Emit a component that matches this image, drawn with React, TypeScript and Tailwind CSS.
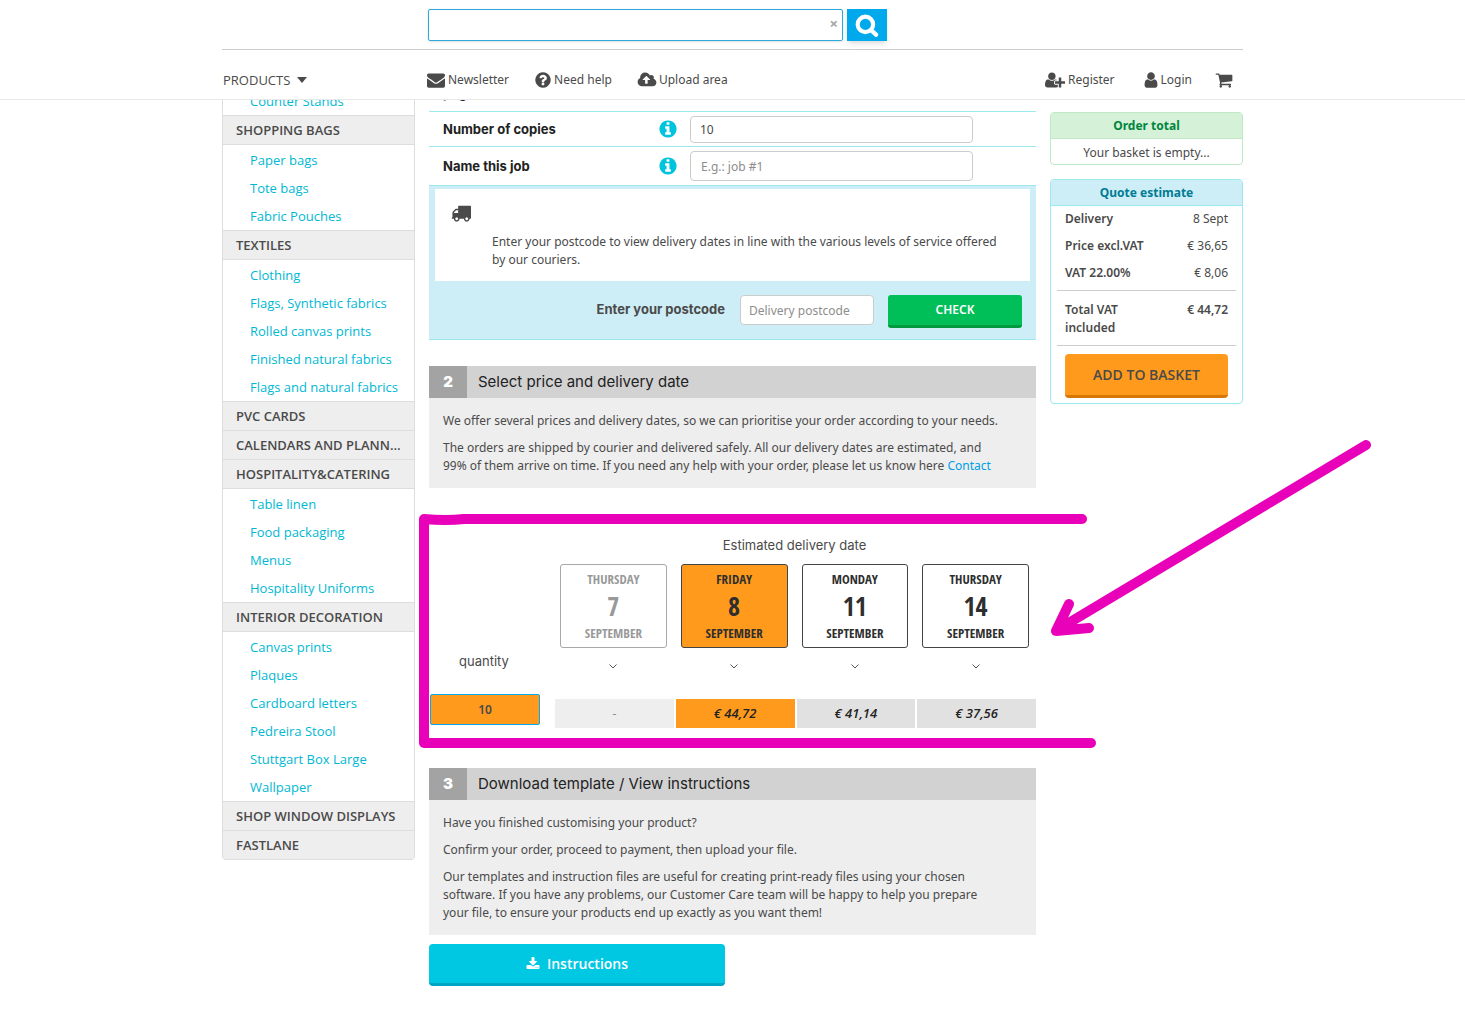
import React, { useState } from "react";

const ICONS = {
  envelope:
    "M1792 710v794q0 66-47 113t-113 47h-1472q-66 0-113-47t-47-113v-794q44 49 101 87 362 246 497 345 57 42 92.5 65.5t94.5 48 110 24.5h2q51 0 110-24.5t94.5-48 92.5-65.5q170-123 498-345 57-39 100-87zm0-294q0 79-49 151t-122 123q-376 261-468 325-10 7-42.5 31t-54 38.5-52 32.5-57.5 27-50 9h-2q-23 0-50-9t-57.5-27-52-32.5-54-38.5-42.5-31q-91-64-262-182.5t-205-142.5q-62-42-117-115.5t-55-136.5q0-78 41.5-130t118.5-52h1472q65 0 112.5 47t47.5 113z",
  question:
    "M1024 1376v-192q0-14-9-23t-23-9h-192q-14 0-23 9t-9 23v192q0 14 9 23t23 9h192q14 0 23-9t9-23zm256-672q0-88-55.5-163t-138.5-116-170-41q-243 0-371 213-15 24 8 42l132 100q7 6 19 6 16 0 25-12 53-68 86-92 34-24 86-24 48 0 85.5 26t37.5 59q0 38-20 61t-68 45q-63 28-115.5 86.5t-52.5 125.5v36q0 14 9 23t23 9h192q14 0 23-9t9-23q0-19 21.5-49.5t54.5-49.5q32-18 49-28.5t46-35 44.5-48 28-60.5 12.5-81zm384 192q0 209-103 385.5t-279.5 279.5-385.5 103-385.5-103-279.5-279.5-103-385.5 103-385.5 279.5-279.5 385.5-103 385.5 103 279.5 279.5 103 385.5z",
  info:
    "M1152 1376v-160q0-14-9-23t-23-9h-96v-512q0-14-9-23t-23-9h-320q-14 0-23 9t-9 23v160q0 14 9 23t23 9h96v320h-96q-14 0-23 9t-9 23v160q0 14 9 23t23 9h448q14 0 23-9t9-23zm-128-896v-160q0-14-9-23t-23-9h-192q-14 0-23 9t-9 23v160q0 14 9 23t23 9h192q14 0 23-9t9-23zm640 416q0 209-103 385.5t-279.5 279.5-385.5 103-385.5-103-279.5-279.5-103-385.5 103-385.5 279.5-279.5 385.5-103 385.5 103 279.5 279.5 103 385.5z",
  upload:
    "M1344 864q0-14-9-23l-352-352q-9-9-23-9t-23 9l-351 351q-10 12-10 24 0 14 9 23t23 9h224v352q0 13 9.5 22.5t22.5 9.5h192q13 0 22.5-9.5t9.5-22.5v-352h224q13 0 22.5-9.5t9.5-22.5zm640 288q0 159-112.5 271.5t-271.5 112.5h-1088q-185 0-316.5-131.5t-131.5-316.5q0-130 70-240t188-165q-2-30-2-43 0-212 150-362t362-150q156 0 285.5 87t188.5 231q71-62 166-62 106 0 181 75t75 181q0 76-41 138 130 31 213.5 135.5t83.5 238.5z",
  userPlus:
    "M704 896q-159 0-271.5-112.5t-112.5-271.5 112.5-271.5 271.5-112.5 271.5 112.5 112.5 271.5-112.5 271.5-271.5 112.5zm960 128h352q13 0 22.5 9.5t9.5 22.5v192q0 13-9.5 22.5t-22.5 9.5h-352v352q0 13-9.5 22.5t-22.5 9.5h-192q-13 0-22.5-9.5t-9.5-22.5v-352h-352q-13 0-22.5-9.5t-9.5-22.5v-192q0-13 9.5-22.5t22.5-9.5h352v-352q0-13 9.5-22.5t22.5-9.5h192q13 0 22.5 9.5t9.5 22.5v352zm-736 224q0 52 38 90t90 38h256v238q-68 50-171 50h-874q-121 0-194-69t-73-190q0-53 3.5-103.5t14-109 26.5-108.5 43-97.5 62-81 85.5-53.5 111.5-20q19 0 39 17 79 61 154.5 91.5t164.5 30.5 164.5-30.5 154.5-91.5q20-17 39-17 132 0 217 96h-223q-52 0-90 38t-38 90v192z",
  user:
    "M1536 1399q0 109-62.5 187t-150.5 78h-854q-88 0-150.5-78t-62.5-187q0-85 8.5-160.5t31.5-152 58.5-131 94-89 134.5-34.5q131 128 313 128t313-128q76 0 134.5 34.5t94 89 58.5 131 31.5 152 8.5 160.5zm-256-887q0 159-112.5 271.5t-271.5 112.5-271.5-112.5-112.5-271.5 112.5-271.5 271.5-112.5 271.5 112.5 112.5 271.5z",
  cart:
    "M704 1536q0 52-38 90t-90 38-90-38-38-90 38-90 90-38 90 38 38 90zm896 0q0 52-38 90t-90 38-90-38-38-90 38-90 90-38 90 38 38 90zm128-1088v512q0 24-16.5 42.5t-40.5 21.5l-1044 122q13 60 13 70 0 16-24 64h920q26 0 45 19t19 45-19 45-45 19h-1024q-26 0-45-19t-19-45q0-11 8-31.5t16-36 21.5-40 15.5-29.5l-177-823h-204q-26 0-45-19t-19-45 19-45 45-19h256q16 0 28.5 6.5t19.5 15.5 13 24.5 8 26 5.5 29.5 4.5 26h1201q26 0 45 19t19 45z",
  truck:
    "M640 1408q0-52-38-90t-90-38-90 38-38 90 38 90 90 38 90-38 38-90zm-384-512h384v-256h-158q-13 0-22 9l-195 195q-9 9-9 22v30zm1280 512q0-52-38-90t-90-38-90 38-38 90 38 90 90 38 90-38 38-90zm256-1088v1024q0 15-4 26.5t-13.5 18.5-16.5 11.5-23.5 6-22.5 2-25.5 0-22.5-.5q0 106-75 181t-181 75-181-75-75-181h-384q0 106-75 181t-181 75-181-75-75-181h-64q-3 0-22.5.5t-25.5 0-22.5-2-23.5-6-16.5-11.5-13.5-18.5-4-26.5q0-26 19-45t45-19v-320q0-8-.5-35t0-38 2.5-34.5 6.5-37 14-30.5 22.5-30l198-198q19-19 50.5-32t58.5-13h160v-192q0-26 19-45t45-19h1024q26 0 45 19t19 45z",
  download:
    "M1344 1344q0-26-19-45t-45-19-45 19-19 45 19 45 45 19 45-19 19-45zm256 0q0-26-19-45t-45-19-45 19-19 45 19 45 45 19 45-19 19-45zm128-224v320q0 40-28 68t-68 28h-1472q-40 0-68-28t-28-68v-320q0-40 28-68t68-28h465l135 136q58 56 136 56t136-56l136-136h464q40 0 68 28t28 68zm-325-569q17 41-14 70l-448 448q-18 19-45 19t-45-19l-448-448q-31-29-14-70 17-39 59-39h256v-448q0-26 19-45t45-19h256q26 0 45 19t19 45v448h256q42 0 59 39z",
};

const CATEGORIES = [
  { title: "SHOPPING BAGS", links: ["Paper bags", "Tote bags", "Fabric Pouches"] },
  {
    title: "TEXTILES",
    links: [
      "Clothing",
      "Flags, Synthetic fabrics",
      "Rolled canvas prints",
      "Finished natural fabrics",
      "Flags and natural fabrics",
    ],
  },
  { title: "PVC CARDS", links: [] },
  { title: "CALENDARS AND PLANNERS", links: [] },
  {
    title: "HOSPITALITY&CATERING",
    links: ["Table linen", "Food packaging", "Menus", "Hospitality Uniforms"],
  },
  {
    title: "INTERIOR DECORATION",
    links: [
      "Canvas prints",
      "Plaques",
      "Cardboard letters",
      "Pedreira Stool",
      "Stuttgart Box Large",
      "Wallpaper",
    ],
  },
  { title: "SHOP WINDOW DISPLAYS", links: [] },
  { title: "FASTLANE", links: [] },
];

const DATES = [
  { weekday: "THURSDAY", day: 7, price: null },
  { weekday: "FRIDAY", day: 8, price: "€ 44,72" },
  { weekday: "MONDAY", day: 11, price: "€ 41,14" },
  { weekday: "THURSDAY", day: 14, price: "€ 37,56" },
];

function Icon({ name, className, wide }: { name: keyof typeof ICONS; className: string; wide?: boolean }) {
  return (
    <svg viewBox={wide ? "0 0 2048 1792" : "0 0 1792 1792"} fill="currentColor" className={className} aria-hidden="true">
      <path d={ICONS[name]} />
    </svg>
  );
}

function Header() {
  return (
    <header className="sticky top-0 z-20 bg-white border-b border-[#e8e8e8]">
      <div className="max-w-[1021px] mx-auto">
        <form className="flex gap-1 pt-[9px] pb-2 pl-[206px] border-b border-[#cccccc]" onSubmit={(e) => e.preventDefault()}>
          <div className="relative w-[415px]">
            <input
              type="text"
              aria-label="Search"
              className="block w-full h-8 px-2 pr-6 rounded-[2px] border border-[#2aa9dc] shadow-sm outline-none"
            />
            <button type="reset" aria-label="Clear" className="absolute right-[5px] top-[5px] text-[15px] leading-[18px] font-bold text-[#a5a5a5]">
              ×
            </button>
          </div>
          <button type="submit" aria-label="Search" className="w-10 h-8 flex items-center justify-center bg-[#00a9ec] text-white shadow-md">
            <svg viewBox="0 0 24 24" className="size-6" fill="none" stroke="currentColor" strokeLinecap="round" aria-hidden="true">
              <circle cx="10.4" cy="11.4" r="7.7" strokeWidth="4.2" />
              <path d="M16.5 17.5l4.5 4.2" strokeWidth="4.4" />
            </svg>
          </button>
        </form>

        <nav className="flex items-center h-[49px] pt-[10px] pr-[10px]">
          <button className="w-[205px] flex items-center gap-[7px] pl-px font-['Open_Sans',sans-serif] text-[13px] font-medium">
            PRODUCTS
            <svg viewBox="0 0 10 6" className="w-[10px] h-[6px]" fill="currentColor" aria-hidden="true">
              <path d="M0 0h10L5 6z" />
            </svg>
          </button>
          <div className="flex gap-[25px]">
            <a href="#newsletter" className="flex items-center gap-[3px]">
              <Icon name="envelope" className="size-[18px]" />
              Newsletter
            </a>
            <a href="#help" className="flex items-center gap-[2px]">
              <Icon name="question" className="size-[18px]" />
              Need help
            </a>
            <a href="#upload" className="flex items-center gap-[2px]">
              <Icon name="upload" wide className="w-5 h-[18px]" />
              Upload area
            </a>
          </div>
          <div className="ml-auto flex items-center gap-[23px]">
            <a href="#register" className="flex items-center gap-[3px] mr-[4px]">
              <Icon name="userPlus" wide className="w-5 h-[18px]" />
              Register
            </a>
            <a href="#login" className="flex items-center gap-px">
              <Icon name="user" className="size-[18px]" />
              Login
            </a>
            <a href="#cart" aria-label="Basket">
              <Icon name="cart" className="size-[18px]" />
            </a>
          </div>
        </nav>
      </div>
    </header>
  );
}

function Sidebar() {
  return (
    <aside className="border-x border-b border-[#dddddd] rounded-b-[4px] font-['Open_Sans',sans-serif] text-[13px]">
      <a href="#counter-stands" className="block h-[28px] leading-[28px] pl-[27px] text-[#00b8d4]">
        Counter Stands
      </a>
      {CATEGORIES.map((category) => (
        <div key={category.title}>
          <h3 className="border-t border-[#dddddd] bg-[#eeeeee] pl-[13px] pr-[10px] leading-[28px] font-semibold truncate">
            {category.title}
          </h3>
          {category.links.length > 0 && (
            <ul className="border-t border-[#dddddd] pt-px">
              {category.links.map((link) => (
                <li key={link} className="h-[28px] leading-[28px]">
                  <a href="#category" className="block pl-[27px] text-[#00b8d4]">
                    {link}
                  </a>
                </li>
              ))}
            </ul>
          )}
        </div>
      ))}
    </aside>
  );
}

function StepTitle({ step, title }: { step: number; title: string }) {
  return (
    <h2 className="flex h-8 items-center bg-[#d2d2d2] font-['Inter',sans-serif] text-[15px] text-[#222222]">
      <span className="flex w-[38px] h-full items-center justify-center bg-[#a3a3a3] text-white font-black">{step}</span>
      <span className="pl-[11px]">{title}</span>
    </h2>
  );
}

function JobForm() {
  return (
    <section>
      <div className="h-[25px] leading-[12px] pl-[14px] border-b border-[#9be9ec] font-['Inter',sans-serif] text-[13px] font-bold text-[#222222]">
        pages
      </div>
      <div className="flex h-[35px] items-center border-b border-[#9be9ec] pl-[14px]">
        <label htmlFor="copies" className="w-[215px] font-['Inter',sans-serif] text-[13px] font-bold text-[#222222]">
          Number of copies
        </label>
        <Icon name="info" className="size-[20px] text-[#00c4de]" />
        <input id="copies" defaultValue="10" className="ml-3 w-[283px] h-[27px] px-[9px] border border-[#cccccc] rounded-[4px]" />
      </div>
      <div className="flex h-[38px] items-center pl-[14px]">
        <label htmlFor="job" className="w-[215px] font-['Inter',sans-serif] text-[13px] font-bold text-[#222222]">
          Name this job
        </label>
        <Icon name="info" className="size-[20px] text-[#00c4de]" />
        <input
          id="job"
          placeholder="E.g.: job #1"
          className="ml-3 w-[283px] h-[30px] px-[10px] border border-[#cccccc] rounded-[4px] placeholder:text-[#8d8d8d]"
        />
      </div>

      <div className="border-y border-[#9be9ec] bg-[#cdeef7] px-[6px] pt-[3px]">
        <div className="bg-white pt-[14px] pb-3 pl-4 pr-6">
          <Icon name="truck" className="size-[20px]" />
          <p className="mt-[10px] pl-[41px]">
            Enter your postcode to view delivery dates in line with the various levels of service offered by our couriers.
          </p>
        </div>
        <form className="flex justify-end items-start pt-[14px] pb-[11px] pr-2" onSubmit={(e) => e.preventDefault()}>
          <label htmlFor="postcode" className="pt-[5px] mr-[15px] font-['Inter',sans-serif] text-[13px] font-bold">
            Enter your postcode
          </label>
          <input
            id="postcode"
            placeholder="Delivery postcode"
            className="w-[134px] h-[30px] mr-[14px] px-2 bg-white border border-[#cccccc] rounded-[4px] placeholder:text-[#8d8d8d]"
          />
          <button className="w-[134px] h-[33px] rounded-[3px] border-b-3 border-[#009a3e] bg-[#00bf58] text-white font-semibold">
            CHECK
          </button>
        </form>
      </div>
    </section>
  );
}

function PriceTable() {
  const [selected, setSelected] = useState(8);

  return (
    <section className="relative pt-[48px] pb-[40px]">
      <table className="w-full table-fixed border-collapse">
        <colgroup>
          <col className="w-[124px]" />
          <col />
          <col />
          <col />
          <col />
        </colgroup>
        <thead>
          <tr>
            <td />
            <th colSpan={4} className="pb-[10px] font-normal font-['Inter',sans-serif] text-[13px]">
              Estimated delivery date
            </th>
          </tr>
          <tr>
            <th className="align-bottom pb-[24px] pr-[14px] font-normal font-['Inter',sans-serif] text-[13px]">quantity</th>
            {DATES.map((date) => (
              <th key={date.day} className="px-[7px] align-top">
                <button
                  onClick={() => setSelected(date.day)}
                  disabled={!date.price}
                  className={`block w-full h-[84px] rounded-[3px] border font-['Open_Sans_Condensed','Liberation_Sans_Narrow',sans-serif] text-[13px] leading-[18px] font-bold ${
                    !date.price
                      ? "border-[#a8a8a8] text-[#999999]"
                      : date.day === selected
                        ? "border-[#444444] bg-[#ff9a1c] text-[#2e2e2e]"
                        : "border-[#444444] text-[#2e2e2e]"
                  }`}
                >
                  {date.weekday}
                  <span className="block text-[26px] leading-[36px]">{date.day}</span>
                  SEPTEMBER
                </button>
                <svg viewBox="0 0 8 5" className="mx-auto mt-[16px] mb-[25px] w-[8px] h-[5px]" fill="none" stroke="#555555" aria-hidden="true">
                  <path d="M0.5 0.5 4 4 7.5 0.5" />
                </svg>
              </th>
            ))}
          </tr>
        </thead>
        <tbody>
          <tr>
            <td className="pb-[3px] pl-px pr-[13px] align-top">
              <button className="block w-full h-[31px] rounded-[2px] border border-[#00a9ec] bg-[#ff9a1c] font-semibold">10</button>
            </td>
            {DATES.map((date) => (
              <td key={date.day} className="pt-[5px] pl-[2px] text-center">
                <div
                  className={
                    !date.price
                      ? "h-[29px] leading-[29px] bg-[#eeeeee] text-[#888888]"
                      : date.day === selected
                        ? "h-[29px] leading-[29px] bg-[#ff9a1c] font-['Open_Sans',sans-serif] text-[13px] font-semibold italic text-[#222222]"
                        : "h-[29px] leading-[29px] bg-[#e1e1e1] font-['Open_Sans',sans-serif] text-[13px] font-semibold italic text-[#222222]"
                  }
                >
                  {date.price ?? "-"}
                </div>
              </td>
            ))}
          </tr>
        </tbody>
      </table>

      {/* Hand-drawn marker: bracket round the table and an arrow */}
      <svg
        viewBox="0 0 960 312"
        className="absolute -top-[48px] -left-[11px] w-[960px] h-[312px] pointer-events-none"
        fill="none"
        stroke="#e900b9"
        strokeWidth="10"
        strokeLinecap="round"
        strokeLinejoin="round"
        aria-hidden="true"
      >
        <path d="M664 79H46Q28 81 6 79V303H673" />
        <path d="M948 5 639 190M651 164 638 191 671 188" />
      </svg>
    </section>
  );
}

function Summary() {
  return (
    <aside className="pt-[25px]">
      <div className="border border-[#bfe8c4] rounded-[4px] text-center">
        <h3 className="h-[26px] leading-[26px] border-b border-[#bfe8c4] bg-[#d5f2d8] rounded-t-[3px] font-bold text-[#00853f]">
          Order total
        </h3>
        <p className="h-[25px] leading-[27px]">Your basket is empty...</p>
      </div>

      <div className="mt-[14px] border border-[#9be9ec] rounded-[4px] pb-[5px]">
        <h3 className="h-[26px] leading-[26px] border-b border-[#9be9ec] bg-[#cdeef7] rounded-t-[3px] text-center font-bold text-[#007c95]">
          Quote estimate
        </h3>
        <dl className="mx-[6px]">
          <div className="flex justify-between px-2 pt-1">
            <dt className="font-semibold">Delivery</dt>
            <dd>8 Sept</dd>
          </div>
          <div className="flex justify-between px-2 pt-[9px]">
            <dt className="font-semibold">Price excl.VAT</dt>
            <dd>€ 36,65</dd>
          </div>
          <div className="flex justify-between px-2 pt-[9px] pb-2">
            <dt className="font-semibold">VAT 22.00%</dt>
            <dd>€ 8,06</dd>
          </div>
          <div className="flex justify-between px-2 pt-[10px] pb-2 border-y border-[#cccccc] font-semibold">
            <dt className="w-[80px]">Total VAT included</dt>
            <dd>€ 44,72</dd>
          </div>
        </dl>
        <div className="px-[14px] pt-2">
          <button className="w-full h-[44px] rounded-[4px] border-b-3 border-[#d97706] bg-[#ff9a1c] font-['Open_Sans',sans-serif] text-[14px] font-semibold">
            ADD TO BASKET
          </button>
        </div>
      </div>
    </aside>
  );
}

export default function App() {
  return (
    <div className="min-h-screen bg-white font-['Noto_Sans','Open_Sans',sans-serif] text-[12px] leading-[18px] text-[#4a4a4a]">
      <Header />
      <div className="max-w-[1021px] mx-auto -mt-[13px] grid grid-cols-[193px_minmax(0,1fr)_193px] gap-x-[14px] items-start">
        <Sidebar />
        <main>
          <JobForm />

          <section className="mt-[26px]">
            <StepTitle step={2} title="Select price and delivery date" />
            <div className="bg-[#eeeeee] pt-[14px] pb-[13px] pl-[14px] pr-[34px] space-y-[9px]">
              <p>We offer several prices and delivery dates, so we can prioritise your order according to your needs.</p>
              <p>
                The orders are shipped by courier and delivered safely. All our delivery dates are estimated, and 99% of them
                arrive on time. If you need any help with your order, please let us know here{" "}
                <a href="#contact" className="text-[#009fe8]">
                  Contact
                </a>
              </p>
            </div>
          </section>

          <PriceTable />

          <section>
            <StepTitle step={3} title="Download template / View instructions" />
            <div className="bg-[#eeeeee] pt-[14px] pb-[13px] pl-[14px] pr-[34px] space-y-[9px]">
              <p>Have you finished customising your product?</p>
              <p>Confirm your order, proceed to payment, then upload your file.</p>
              <p>
                Our templates and instruction files are useful for creating print-ready files using your chosen software. If
                you have any problems, our Customer Care team will be happy to help you prepare your file, to ensure your
                products end up exactly as you want them!
              </p>
            </div>
            <button className="mt-[9px] w-[296px] h-[42px] flex items-center justify-center gap-[7px] rounded-[4px] border-b-3 border-[#00a5c4] bg-[#00c7e2] font-['Open_Sans',sans-serif] text-[14px] font-semibold text-white">
              <Icon name="download" className="size-[14px]" />
              Instructions
            </button>
          </section>
        </main>
        <Summary />
      </div>
    </div>
  );
}
